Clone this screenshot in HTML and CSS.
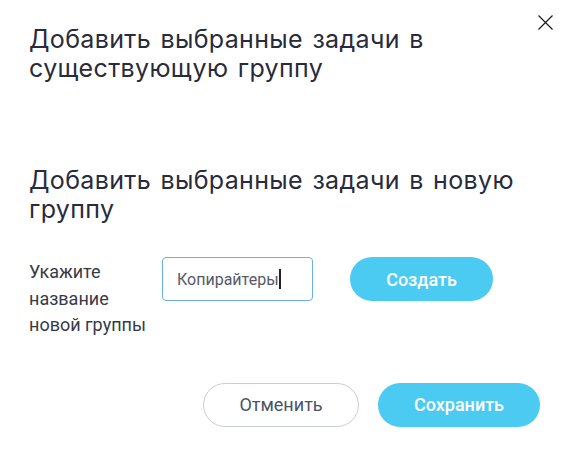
FILE: index.html
```html
<!DOCTYPE html>
<html lang="ru">
<head>
<meta charset="utf-8">
<link rel="stylesheet" href="styles.css">
</head>
<body>
<div class="modal">
  <button class="close" aria-label="Закрыть">
    <svg width="15" height="15" viewBox="0 0 15 15"><path d="M0.5 0.5L14.5 14.5M14.5 0.5L0.5 14.5" stroke="#1a1a1a" stroke-width="1.2" fill="none"/></svg>
  </button>
  <h2 class="title">Добавить выбранные задачи в существующую группу</h2>
  <h2 class="title title-new">Добавить выбранные задачи в новую группу</h2>
  <div class="create-row">
    <div class="label">Укажите название новой группы</div>
    <div class="input">Копирайтеры<span class="caret"></span></div>
    <button class="btn btn-primary btn-create">Создать</button>
  </div>
  <div class="footer">
    <button class="btn btn-outline">Отменить</button>
    <button class="btn btn-primary btn-save">Сохранить</button>
  </div>
</div>
</body>
</html>
```
FILE: styles.css
```css
* { box-sizing: border-box; }
html, body { margin: 0; padding: 0; background: #fff; }
.modal {
  position: relative;
  width: 574px;
  height: 455px;
  padding: 25px 34px 0 29px;
}
.close {
  position: absolute;
  top: 15px;
  left: 538px;
  width: 15px;
  height: 15px;
  padding: 0;
  border: 0;
  background: none;
  display: block;
}
.close svg { display: block; }
.title {
  margin: 0;
  width: 510px;
  font-family: Inter, "Noto Sans", sans-serif;
  font-weight: 400;
  font-size: 25px;
  line-height: 29px;
  color: #272b3b;
  letter-spacing: 0.35px;
  word-spacing: 2px;
}
.title-new { margin-top: 83px; }
.create-row {
  display: flex;
  align-items: flex-start;
  margin-top: 33px;
}
.label {
  width: 120px;
  margin-right: 13px;
  font-family: Roboto, "Liberation Sans", sans-serif;
  font-size: 18px;
  line-height: 26.5px;
  color: #373a47;
  padding-top: 2px;
}
.input {
  width: 151px;
  height: 44px;
  border: 1px solid #6aaee6;
  border-radius: 4px;
  padding: 0 0 0 14px;
  display: flex;
  align-items: center;
  font-family: Roboto, "Liberation Sans", sans-serif;
  font-size: 16px;
  color: #555a66;
}
.caret {
  display: inline-block;
  width: 2px;
  height: 20px;
  background: #222;
}
.btn {
  height: 44px;
  border-radius: 22px;
  font-family: Roboto, "Liberation Sans", sans-serif;
  font-size: 18px;
  padding: 0;
  cursor: pointer;
}
.btn-primary {
  background: #4ccbf2;
  border: 0;
  color: #fff;
  font-weight: 500;
}
.btn-create { width: 143px; margin-left: 37px; }
.footer {
  display: flex;
  justify-content: flex-end;
  gap: 19px;
  margin-top: 44px;
  width: 511px;
}
.btn-outline {
  width: 156px;
  background: #fff;
  border: 1px solid #c9ced9;
  color: #4c5268;
  font-weight: 400;
}
.btn-save { width: 162px; }
```
